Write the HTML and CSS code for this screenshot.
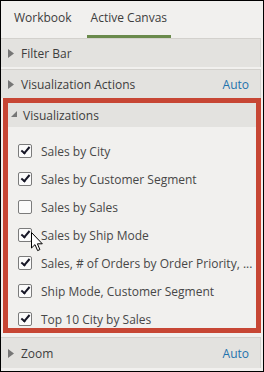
FILE: index.html
```html
<!DOCTYPE html>
<html>
<head>
    <title>Canvas Properties</title>
    <link rel="stylesheet" href="styles.css">
</head>
<body>
    <div class="panel">
        <div class="tabs">
            <div class="tab">Workbook</div>
            <div class="tab active">Active Canvas</div>
        </div>

        <div class="section">
            <svg class="arrow" width="6" height="9" viewBox="0 0 6 9"><path d="M0 0 L6 4.5 L0 9 Z" fill="#767676"/></svg>
            <span class="title">Filter Bar</span>
        </div>
        <div class="section">
            <svg class="arrow" width="6" height="9" viewBox="0 0 6 9"><path d="M0 0 L6 4.5 L0 9 Z" fill="#767676"/></svg>
            <span class="title">Visualization Actions</span>
            <span class="value">Auto</span>
        </div>

        <div class="highlight">
            <div class="section open">
                <svg class="arrow" width="6" height="6" viewBox="0 0 6 6"><path d="M6 0 L6 6 L0 6 Z" fill="#767676"/></svg>
                <span class="title">Visualizations</span>
            </div>
            <div class="list">
                <label class="item"><span class="box checked"></span>Sales by City</label>
                <label class="item"><span class="box checked"></span>Sales by Customer Segment</label>
                <label class="item"><span class="box"></span>Sales by Sales</label>
                <label class="item"><span class="box checked"></span>Sales by Ship Mode</label>
                <label class="item"><span class="box checked"></span>Sales, # of Orders by Order Priority, ...</label>
                <label class="item"><span class="box checked"></span>Ship Mode, Customer Segment</label>
                <label class="item"><span class="box checked"></span>Top 10 City by Sales</label>
            </div>
        </div>

        <div class="section last">
            <svg class="arrow" width="6" height="9" viewBox="0 0 6 9"><path d="M0 0 L6 4.5 L0 9 Z" fill="#767676"/></svg>
            <span class="title">Zoom</span>
            <span class="value">Auto</span>
        </div>

        <!-- mouse pointer over the Ship Mode checkbox -->
        <svg class="cursor" width="13" height="20" viewBox="0 0 13 20">
            <path d="M0.5 0.5 L0.5 16 L4 12.6 L6.6 18.6 L8.9 17.6 L6.4 11.8 L11.3 11.8 Z" fill="#fff" stroke="#000" stroke-width="1"/>
        </svg>
    </div>
</body>
</html>
```

FILE: styles.css
```css
body {
    margin: 0;
    font-family: "Open Sans", "Noto Sans", sans-serif;
    font-size: 12px;
    color: #3d3d3d;
}

.panel {
    position: relative;
    width: 264px;
    height: 372px;
    box-sizing: border-box;
    border: 1px solid #000;
    background-color: #f1f0ee;
    overflow: hidden;
}

.tabs {
    display: flex;
    height: 37px;
    padding-left: 9px;
}

.tab {
    padding: 0 4px;
    margin-right: 11px;
    line-height: 34px;
    color: #3d3d3d;
    border-bottom: 3px solid transparent;
}

.tab.active {
    border-bottom-color: #6a8a4c;
}

.section {
    display: flex;
    align-items: center;
    height: 28px;
    margin-right: 2px;
    padding: 0 8px 0 7px;
    background-color: #e3e2df;
    border-top: 1px solid #d3d1cd;
    border-right: 1px solid #d3d1cd;
}

.section + .section {
    margin-top: 2px;
}

.arrow {
    margin-right: 7px;
}

.title {
    flex: 1;
}

.value {
    color: #1f72ad;
    margin-right: 3px;
}

.highlight {
    margin: 0 2px 4px 2px;
    border: 5px solid #c74634;
    height: 225px;
}

.section.open {
    height: 24px;
    margin: 0;
    padding-left: 3px;
    border: none;
}

.section.open .arrow {
    margin: 0 6px 3px 0;
}

.list {
    display: flex;
    flex-direction: column;
    gap: 10px;
    padding: 15px 0 0 10px;
}

.item {
    display: flex;
    align-items: center;
    height: 18px;
    color: #474747;
    white-space: nowrap;
}

.box {
    flex-shrink: 0;
    width: 12px;
    height: 12px;
    margin-right: 9px;
    border: 1px solid #7b7b7b;
    border-radius: 2px;
    background-color: #fbfbfb;
    position: relative;
}

.box.checked::after {
    content: "";
    position: absolute;
    left: 4px;
    top: 0px;
    width: 3px;
    height: 7px;
    border: solid #161626;
    border-width: 0 2px 2px 0;
    transform: rotate(40deg);
}

.section.last {
    margin-top: 0;
    height: 30px;
}

.cursor {
    position: absolute;
    left: 30px;
    top: 231px;
}
```
